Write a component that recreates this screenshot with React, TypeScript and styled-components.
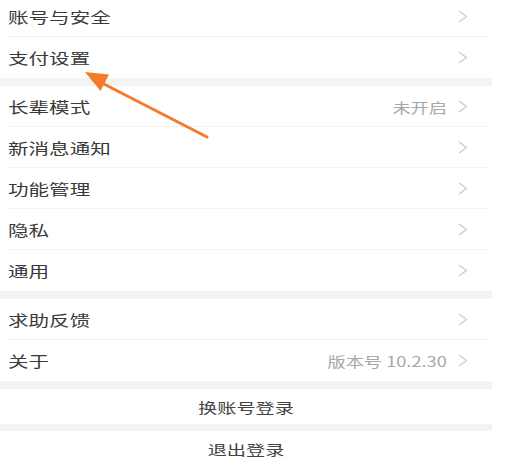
import React from 'react';
import styled, { createGlobalStyle } from 'styled-components';

const GlobalStyle = createGlobalStyle`
    html, body {
        margin: 0;
        padding: 0;
        background: #fff;
        overflow: hidden;
    }
    body {
        font-family: "Noto Sans CJK SC", "Noto Sans", sans-serif;
    }
`;

const Page = styled.div`
    position: relative;
    width: 492px;
    margin-top: -4px;
    background: #fff;
`;

const Group = styled.div`
    display: flex;
    flex-direction: column;
`;

const Gap = styled.div<{ $h?: number }>`
    height: ${p => p.$h ?? 8}px;
    background: #f3f3f3;
`;

const Row = styled.div<{ $last?: boolean }>`
    position: relative;
    display: flex;
    align-items: center;
    justify-content: space-between;
    height: 41px;
    padding: 0 24px 0 8px;
    box-sizing: border-box;

    &::after {
        content: '';
        display: ${p => (p.$last ? 'none' : 'block')};
        position: absolute;
        left: 6px;
        right: 2px;
        bottom: 0;
        height: 1px;
        background: #f2f2f2;
    }
`;

const Label = styled.span`
    display: inline-block;
    font-size: 15px;
    color: #3a3a3a;
    transform: scaleX(1.37);
    transform-origin: left center;
    white-space: nowrap;
`;

const Right = styled.div`
    display: flex;
    align-items: center;
    gap: 10px;
`;

const Value = styled.span`
    display: inline-block;
    font-size: 14px;
    color: #a8a8a8;
    transform: scaleX(1.3);
    transform-origin: right center;
    white-space: nowrap;
`;

const Chevron = styled.svg`
    width: 11px;
    height: 13px;
    display: block;
`;

const Button = styled.div<{ $h: number }>`
    display: flex;
    align-items: center;
    justify-content: center;
    height: ${p => p.$h}px;
`;

const ButtonText = styled.span`
    display: inline-block;
    font-size: 14px;
    color: #444;
    transform: scaleX(1.37);
    white-space: nowrap;
`;

const Arrow = styled.svg`
    position: absolute;
    left: 0;
    top: 4px;
    width: 492px;
    height: 200px;
    pointer-events: none;
`;

const Arr = () => (
    <Chevron viewBox="0 0 11 13">
        <path d="M2 1 L9.5 6.5 L2 12" fill="none" stroke="#c9c9c9" strokeWidth="1.2" />
    </Chevron>
);

type Item = { title: string; value?: string };

const group1: Item[] = [{ title: '账号与安全' }, { title: '支付设置' }];
const group2: Item[] = [
    { title: '长辈模式', value: '未开启' },
    { title: '新消息通知' },
    { title: '功能管理' },
    { title: '隐私' },
    { title: '通用' },
];
const group3: Item[] = [{ title: '求助反馈' }, { title: '关于', value: '版本号 10.2.30' }];

const List = ({ items }: { items: Item[] }) => (
    <Group>
        {items.map((it, i) => (
            <Row key={it.title} $last={i === items.length - 1}>
                <Label>{it.title}</Label>
                <Right>
                    {it.value && <Value>{it.value}</Value>}
                    <Arr />
                </Right>
            </Row>
        ))}
    </Group>
);

const App = () => {
    return (
        <>
            <GlobalStyle />
            <Page>
                <List items={group1} />
                <Gap />
                <List items={group2} />
                <Gap />
                <List items={group3} />
                <Gap />
                <Button $h={35}>
                    <ButtonText>换账号登录</ButtonText>
                </Button>
                <Gap $h={7} />
                <Button $h={36}>
                    <ButtonText>退出登录</ButtonText>
                </Button>

                <Arrow viewBox="0 0 492 200">
                    <line x1="100" y1="82" x2="207" y2="137" stroke="#f47a2c" strokeWidth="3" strokeLinecap="round" />
                    <polygon points="85,72 100.5,91 109,74.5" fill="#f47a2c" />
                </Arrow>
            </Page>
        </>
    );
};

export default App;
